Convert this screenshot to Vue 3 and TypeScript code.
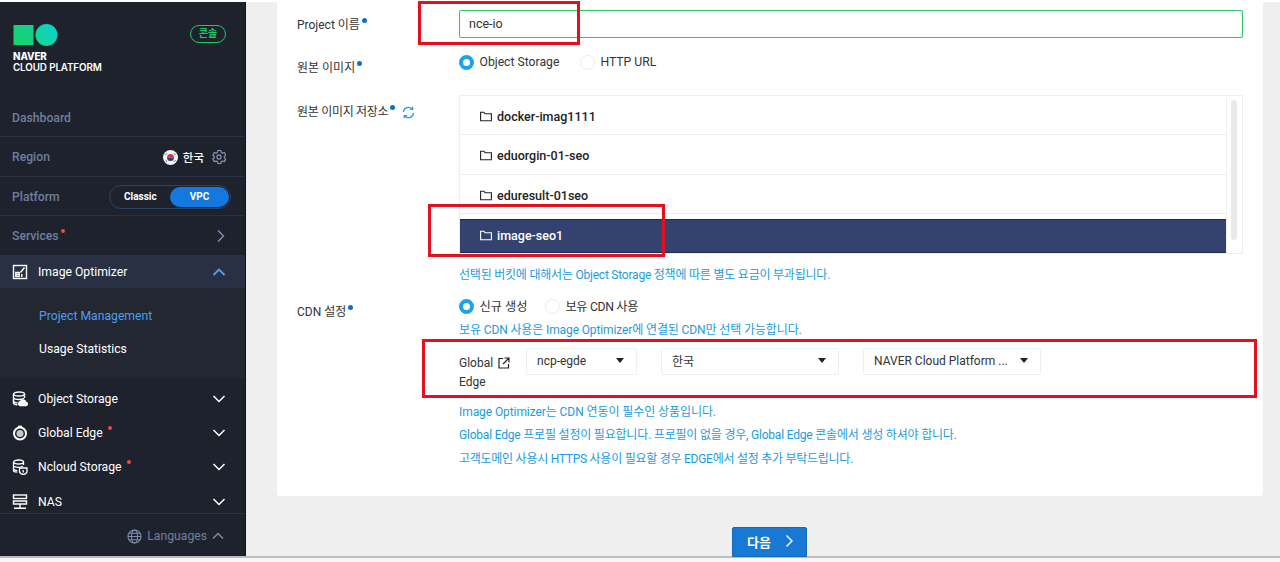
<script setup lang="ts">
const buckets = ['docker-imag1111', 'eduorgin-01-seo', 'eduresult-01seo']
const navs = [
  { name: 'Object Storage', icon: 'os', dot: false },
  { name: 'Global Edge', icon: 'ge', dot: true },
  { name: 'Ncloud Storage', icon: 'nc', dot: true },
  { name: 'NAS', icon: 'nas', dot: false },
]
const selects = [
  { text: 'ncp-egde', cls: 's1' },
  { text: '한국', cls: 's2' },
  { text: 'NAVER Cloud Platform ...', cls: 's2' },
]
const notes = [
  'Image Optimizer는 CDN 연동이 필수인 상품입니다.',
  'Global Edge 프로필 설정이 필요합니다. 프로필이 없을 경우, Global Edge 콘솔에서 생성 하셔야 합니다.',
  '고객도메인 사용시 HTTPS 사용이 필요할 경우 EDGE에서 설정 추가 부탁드립니다.',
]
</script>

<template>
  <div class="page">
    <div class="top-strip"></div>
    <div class="body">
      <aside class="side">
        <div class="brand">
          <div class="brand-left">
            <svg class="logo" width="46" height="22" viewBox="0 0 46 22">
              <defs>
                <linearGradient id="lg1" x1="0" y1="1" x2="1" y2="0">
                  <stop offset="0" stop-color="#17d36b" />
                  <stop offset="1" stop-color="#12cf8f" />
                </linearGradient>
                <linearGradient id="lg2" x1="0" y1="1" x2="1" y2="0">
                  <stop offset="0" stop-color="#14d78a" />
                  <stop offset="1" stop-color="#0fcfd0" />
                </linearGradient>
              </defs>
              <rect x="0.5" y="1" width="20" height="20" fill="url(#lg1)" />
              <circle cx="33.5" cy="11" r="11" fill="url(#lg2)" />
            </svg>
            <div class="brand-name"><b>NAVER</b><span>CLOUD PLATFORM</span></div>
          </div>
          <span class="console">콘솔</span>
        </div>

        <div class="row"><span class="row-title">Dashboard</span></div>
        <div class="row">
          <span class="row-title">Region</span>
          <span class="region">
            <svg width="15" height="15" viewBox="0 0 15 15">
              <circle cx="7.5" cy="7.5" r="7.5" fill="#f4f4f4" />
              <path d="M4 7.500a3.500 3.500 0 0 1 7 0z" fill="#d8333f" />
              <path d="M4 7.500a3.500 3.500 0 0 0 7 0z" fill="#27408f" />
              <path d="M2.500 4.800l1.400-1.400M2.600 10.300l1.400 1.400M12.500 4.800l-1.400-1.400M12.400 10.300l-1.400 1.400" stroke="#444" stroke-width="1" />
            </svg>
            <span class="region-name">한국</span>
            <svg width="14" height="14" viewBox="0 0 24 24" fill="none" stroke="#8a99b6" stroke-width="2" stroke-linejoin="round">
              <circle cx="12" cy="12" r="3.600" />
              <path d="M9.500 1.500h5l.7 3.200 2.200 1.300 3.200-1 2.400 4.300-2.400 2.200v2.500l2.400 2.200-2.400 4.300-3.200-1-2.200 1.300-.7 3.200h-5l-.7-3.200-2.200-1.300-3.200 1L.8 16l2.400-2.200v-2.500L.8 9.100l2.400-4.100 3.200 1 2.400-1.300z" transform="translate(.6 -.6)" />
            </svg>
          </span>
        </div>
        <div class="row">
          <span class="row-title">Platform</span>
          <span class="toggle">
            <span class="toggle-off">Classic</span>
            <span class="toggle-on">VPC</span>
          </span>
        </div>
        <div class="row">
          <span class="row-title">Services<i class="dot dot-svc"></i></span>
          <svg class="chev" width="12" height="14" viewBox="0 0 12 14" fill="none" stroke="#7f8fae" stroke-width="1.400">
            <path d="M3 1.500 8.500 7 3 12.500" />
          </svg>
        </div>

        <div class="active-head">
          <svg class="nav-icon" width="16" height="16" viewBox="0 0 16 16" fill="none" stroke="#fff" stroke-width="1.400">
            <rect x="1.500" y="1.500" width="13" height="13" />
            <path d="M3.800 8.500h3.400v4H3.800zM8.500 8.500l4-5" />
            <path d="M3.800 10.500h3.400M9.800 10v3" />
          </svg>
          <span class="nav-name">Image Optimizer</span>
          <svg class="nav-chev" width="14" height="10" viewBox="0 0 14 10" fill="none" stroke="#4aa3f5" stroke-width="1.800">
            <path d="M1.500 8 7 2.500 12.500 8" />
          </svg>
        </div>
        <div class="submenu">
          <a class="sub sub-on">Project Management</a>
          <a class="sub">Usage Statistics</a>
        </div>

        <div class="navs">
          <div v-for="n in navs" :key="n.name" class="nav">
            <svg v-if="n.icon === 'os'" class="nav-icon" width="16" height="16" viewBox="0 0 16 16" fill="none" stroke="#fff" stroke-width="1.400">
              <ellipse cx="7" cy="3" rx="5.500" ry="2" />
              <path d="M1.500 3v9c0 1 2 1.700 4 1.800M12.500 3v4M1.500 6.500c0 1.100 2.500 2 5.500 2 2 0 4-.4 5-1.200M1.500 10c0 1 2 1.700 4 1.900" />
              <path d="M8 14.500h5.500a1.700 1.700 0 0 0 .2-3.400 2.700 2.700 0 0 0-5.200-.3A1.900 1.900 0 0 0 8 14.500z" fill="#fff" />
            </svg>
            <svg v-else-if="n.icon === 'ge'" class="nav-icon" width="16" height="16" viewBox="0 0 16 16" fill="none">
              <circle cx="8" cy="8.500" r="6" stroke="#fff" stroke-width="2" />
              <circle cx="8" cy="8.500" r="3.500" fill="#c9c9c9" />
              <path d="M6 1.300h4" stroke="#fff" stroke-width="1.300" />
            </svg>
            <svg v-else-if="n.icon === 'nc'" class="nav-icon" width="16" height="16" viewBox="0 0 16 16" fill="none" stroke="#fff" stroke-width="1.300">
              <ellipse cx="6.500" cy="3" rx="5" ry="2" />
              <path d="M1.500 3v8.500c0 1 1.800 1.600 3.800 1.700M11.500 3v3M1.500 6.500c0 1 2.300 1.800 5 1.800 1.800 0 3.400-.3 4.500-1M1.500 9.800c0 1 1.800 1.600 3.800 1.800" />
              <path d="M7.500 9h7.500v3.500c0 1.300-1.600 2.500-3.700 3-2.200-.5-3.800-1.700-3.800-3z" />
              <path d="M11.200 11v2.500" />
            </svg>
            <svg v-else class="nav-icon" width="16" height="16" viewBox="0 0 16 16" fill="none" stroke="#fff" stroke-width="1.400">
              <rect x="1.500" y="1" width="13" height="3.500" />
              <path d="M1.500 7h13v3h-13z" />
              <path d="M8 10v4M2 14.300h12" />
            </svg>
            <span class="nav-name">{{ n.name }}<i v-if="n.dot" class="dot dot-nav"></i></span>
            <svg class="nav-chev" width="14" height="10" viewBox="0 0 14 10" fill="none" stroke="#fff" stroke-width="1.500">
              <path d="M1.500 2 7 7.500 12.500 2" />
            </svg>
          </div>
        </div>

        <div class="lang">
          <svg width="15" height="15" viewBox="0 0 16 16" fill="none" stroke="#7f8fae" stroke-width="1.100">
            <circle cx="8" cy="8" r="7" />
            <ellipse cx="8" cy="8" rx="3.200" ry="7" />
            <path d="M1 8h14M2 4.500h12M2 11.500h12" />
          </svg>
          <span>Languages</span>
          <svg width="12" height="8" viewBox="0 0 12 8" fill="none" stroke="#7f8fae" stroke-width="1.300">
            <path d="M1 6.500 6 1.500l5 5" />
          </svg>
        </div>
      </aside>

      <main class="main">
        <section class="card">
          <div class="form-row r-name">
            <label class="lbl">Project 이름<i class="req"></i></label>
            <div class="ctrl"><div class="input">nce-io</div></div>
          </div>

          <div class="form-row r-src">
            <label class="lbl lbl-src">원본 이미지<i class="req"></i></label>
            <div class="ctrl radios">
              <span class="radio on"></span><span class="r-text">Object Storage</span>
              <span class="radio"></span><span class="r-text">HTTP URL</span>
            </div>
          </div>

          <div class="form-row r-store">
            <label class="lbl lbl-store">
              <span class="tight">원본 이미지 저장소</span><i class="req"></i>
              <svg class="refresh" width="13" height="13" viewBox="0 0 14 14" fill="none" stroke="#1ba5e8" stroke-width="1.400">
                <path d="M1.500 6.500A5.500 5.500 0 0 1 11 3.200" />
                <path d="M12.500 7.500A5.500 5.500 0 0 1 3 10.800" />
                <path d="M11.500 .8v2.800H8.700M2.500 13.200v-2.800h2.800" />
              </svg>
            </label>
            <div class="ctrl">
              <div class="list">
                <div class="list-items">
                  <div v-for="b in buckets" :key="b" class="bucket">
                    <svg class="folder" width="12" height="11" viewBox="0 0 12 11" fill="none" stroke="#222" stroke-width="1.100">
                      <path d="M.6 2V9.800h10.800V2.800H5L4 1.200H.6z" />
                    </svg>
                    {{ b }}
                  </div>
                  <div class="bucket-sel">
                    <svg class="folder" width="12" height="11" viewBox="0 0 12 11" fill="none" stroke="#fff" stroke-width="1.100">
                      <path d="M.6 2V9.800h10.800V2.800H5L4 1.200H.6z" />
                    </svg>
                    image-seo1
                  </div>
                </div>
                <div class="track"><span class="thumb"></span></div>
              </div>
              <p class="note note-store">선택된 버킷에 대해서는 Object Storage 정책에 따른 별도 요금이 부과됩니다.</p>
            </div>
          </div>

          <div class="form-row r-cdn">
            <label class="lbl lbl-cdn">CDN 설정<i class="req"></i></label>
            <div class="ctrl">
              <div class="radios radios-cdn">
                <span class="radio on"></span><span class="r-text">신규 생성</span>
                <span class="radio"></span><span class="r-text tight">보유 CDN 사용</span>
              </div>
              <p class="note note-cdn">보유 CDN 사용은 Image Optimizer에 연결된 CDN만 선택 가능합니다.</p>
              <div class="edge">
                <div class="edge-label">
                  Global
                  <svg class="ext" width="12" height="12" viewBox="0 0 12 12" fill="none" stroke="#222" stroke-width="1.200">
                    <path d="M5 1.500H1v9.500h9.500V7M6.500 1h4.500v4.500M11 1 5 7" />
                  </svg>
                  Edge
                </div>
                <div v-for="s in selects" :key="s.text" class="select" :class="s.cls">
                  <span>{{ s.text }}</span><i class="caret"></i>
                </div>
              </div>
              <div class="notes">
                <p v-for="n in notes" :key="n" class="note-line">{{ n }}</p>
              </div>
            </div>
          </div>
        </section>
        <div class="actions">
          <button class="next" type="button">
            다음
            <svg width="9" height="14" viewBox="0 0 9 14" fill="none" stroke="#fff" stroke-width="1.400">
              <path d="M1.500 1.500 7 7l-5.500 5.500" />
            </svg>
          </button>
        </div>
      </main>
    </div>
    <div class="bottom-bar"></div>

    <div class="mark m1"></div>
    <div class="mark m2"></div>
    <div class="mark m3"></div>
  </div>
</template>

<style>
html, body { margin: 0; padding: 0; overflow: hidden; }
</style>

<style scoped>
* { box-sizing: border-box; }
.page {
  position: relative;
  width: 1280px;
  height: 562px;
  overflow: hidden;
  display: flex;
  flex-direction: column;
  background: #fff;
  font-family: Roboto, "Noto Sans CJK KR", sans-serif;
  font-size: 12px;
  color: #333;
}
.top-strip { height: 2px; background: #fff; flex: none; }
.body { flex: 1; display: flex; min-height: 0; }
.bottom-bar { height: 6px; flex: none; background: #f6f6f6; border-top: 2px solid #bdbdbd; position: relative; z-index: 1; }

/* sidebar */
.side {
  width: 246px;
  flex: none;
  background: #1e222d;
  border-right: 1px solid #111;
  display: flex;
  flex-direction: column;
  font-weight: 500;
}
.brand {
  height: 96px;
  flex: none;
  display: flex;
  justify-content: space-between;
  padding: 22px 19px 0 13px;
}
.logo { display: block; }
.brand-name {
  display: flex;
  flex-direction: column;
  margin-top: 6px;
  color: #fff;
  font-size: 9.800px;
  line-height: 10.500px;
  font-family: Inter, Roboto, sans-serif;
  font-weight: 600;
  letter-spacing: -.1px;
}
.brand-name b { font-weight: 800; }
.console {
  margin-top: 1px;
  width: 36px;
  height: 18px;
  border: 1.500px solid #1fc964;
  border-radius: 9px;
  color: #1fc964;
  font-size: 10px;
  font-weight: 700;
  line-height: 15px;
  text-align: center;
}
.row {
  height: 39.250px;
  flex: none;
  display: flex;
  align-items: center;
  justify-content: space-between;
  padding: 2px 19px 0 12px;
  border-bottom: 1px solid #2a3142;
}
.row:nth-of-type(5) { border-bottom: none; }
.row-title { color: #6f7f9e; font-size: 12.200px; position: relative; }
.region { display: flex; align-items: center; }
.region-name { color: #fff; font-size: 11.500px; margin: 0 8px 0 5px; }
.toggle {
  width: 122px;
  height: 24px;
  margin-right: -5px;
  border: 1px solid #2a4565;
  border-radius: 12px;
  display: flex;
  align-items: center;
  justify-content: space-between;
  padding: 1px;
  font-size: 10px;
  font-weight: 700;
  color: #fff;
}
.toggle-off { padding-left: 13px; }
.toggle-on {
  width: 59px;
  height: 20px;
  border-radius: 10px;
  background: #1578e0;
  text-align: center;
  line-height: 20px;
}
.dot { position: absolute; width: 4px; height: 4px; border-radius: 50%; background: #ef4b3e; display: block; }
.dot-svc { right: -6px; top: 0; }
.chev { margin-right: -1px; }
.active-head {
  height: 33px;
  flex: none;
  display: flex;
  align-items: center;
  background: #2a3044;
  padding: 0 19px 0 12px;
}
.nav-icon { flex: none; margin-right: 10px; }
.nav-name { flex: 1; color: #fff; font-size: 12.200px; font-weight: 400; position: relative; }
.nav-chev { flex: none; }
.submenu {
  height: 90px;
  flex: none;
  background: #222732;
  display: flex;
  flex-direction: column;
  padding: 12px 0 0 39px;
}
.sub { height: 33px; line-height: 33px; color: #fff; font-size: 12.200px; font-weight: 400; }
.sub-on { color: #4b9ff0; }
.navs {
  flex: 1;
  min-height: 0;
  display: flex;
  flex-direction: column;
  padding-top: 3.500px;
  border-bottom: 1px solid #2a3142;
}
.nav {
  height: 34.400px;
  flex: none;
  display: flex;
  align-items: center;
  padding: 0 19px 0 12px;
}
.nav:nth-child(2) .dot-nav { left: 70px; top: 0; }
.nav:nth-child(3) .dot-nav { left: 89px; top: 0; }
.lang {
  height: 42px;
  flex: none;
  display: flex;
  align-items: center;
  justify-content: flex-end;
  gap: 5px;
  padding: 2px 21px 0 0;
  color: #6f7f9e;
  font-size: 12.200px;
  font-weight: 400;
}

/* main */
.main {
  flex: 1;
  min-width: 0;
  position: relative;
  background: #efefef;
  padding: 0 17px 0 31px;
}
.card {
  height: 494px;
  background: #fff;
  border-radius: 0 0 3px 3px;
  padding: 8px 20px 0;
}
.form-row { display: flex; }
.lbl { width: 162px; flex: none; font-size: 12px; color: #333; display: block; }
.ctrl { flex: 1; min-width: 0; }
.tight { letter-spacing: -.3px; }
.req {
  display: inline-block;
  width: 5px;
  height: 5px;
  border-radius: 50%;
  background: #0f6fd1;
  vertical-align: 6px;
  margin-left: 2px;
}
.r-name { height: 28px; margin-bottom: 14px; }
.r-name .lbl { line-height: 30px; }
.input {
  height: 28px;
  border: 1px solid #2cc56a;
  border-radius: 2px;
  padding-left: 9px;
  line-height: 26px;
  font-size: 12.500px;
  color: #333;
}
.r-src { height: 20px; margin-bottom: 23px; }
.lbl-src { line-height: 32px; }
.radios { display: flex; align-items: center; height: 20px; }
.radio {
  width: 15px;
  height: 15px;
  border-radius: 50%;
  border: 1px solid #ececec;
  background: #fff;
  flex: none;
}
.radio.on { border: 4.500px solid #1ba5e8; }
.r-text { font-size: 12.200px; margin: 0 20.500px 0 5.500px; color: #333; }
.lbl-store { line-height: 34px; }
.refresh { vertical-align: -3px; margin-left: 7px; }
.list {
  height: 159px;
  border: 1px solid #efefef;
  display: flex;
}
.list-items { flex: 1; min-width: 0; display: flex; flex-direction: column; border-right: 1px solid #f2f2f2; }
.bucket {
  height: 39.300px;
  flex: none;
  display: flex;
  align-items: center;
  padding: 3px 0 0 20px;
  font-size: 12.500px;
  font-weight: 500;
  color: #222;
  border-bottom: 1.500px solid #ececec;
}
.folder { margin-right: 5px; flex: none; }
.bucket-sel {
  height: 34px;
  margin-top: 5px;
  flex: none;
  display: flex;
  align-items: center;
  padding-left: 20px;
  background: #34426f;
  border-top: 1px solid #1c2a55;
  border-bottom: 1px solid #1c2a55;
  color: #fff;
  font-size: 12.500px;
  font-weight: 500;
}
.track { width: 15px; flex: none; padding: 4px 0 0 4px; }
.thumb { display: block; width: 6px; height: 140px; border-radius: 3px; background: #e9e9e9; }
.note { margin: 0; color: #1a9be0; font-size: 12px; letter-spacing: -.22px; }
.note-store { margin-top: 12px; line-height: 18px; margin-bottom: 12px; height: 18px; }
.r-cdn { height: 0; }
.lbl-cdn { line-height: 32px; }
.radios-cdn .r-text { margin-right: 17.500px; }
.note-cdn { line-height: 18px; margin-top: 5px; letter-spacing: -.12px; }
.edge { display: flex; margin-top: 9px; height: 52.500px; align-items: flex-start; }
.edge-label { width: 67px; padding-right: 10px; font-size: 12px; line-height: 19px; padding-top: 6px; color: #333; flex: none; }
.ext { vertical-align: -2px; margin-left: 2px; }
.select {
  height: 27px;
  margin-right: 24px;
  background: #fff;
  border: 1px solid #efefef;
  border-radius: 2px;
  display: flex;
  align-items: center;
  justify-content: space-between;
  padding: 0 12px 2px 10px;
  font-size: 12px;
  color: #333;
}
.select.s1 { width: 111px; }
.select.s2 { width: 178px; }
.caret {
  display: block;
  width: 0;
  height: 0;
  border-left: 4px solid transparent;
  border-right: 4px solid transparent;
  border-top: 5px solid #222;
}
.notes { display: flex; flex-direction: column; }
.note-line { margin: 0; height: 23.500px; line-height: 23.500px; color: #1a9be0; font-size: 12px; white-space: nowrap; letter-spacing: -.2px; }
.note-line:first-child { letter-spacing: -.08px; }
.note-line:last-child { letter-spacing: -.26px; }
.actions { display: flex; padding: 31px 0 0 455px; }
.next {
  width: 75px;
  height: 30px;
  background: #1779d4;
  border: 1px solid #1368ba;
  border-radius: 2px 2px 0 0;
  color: #fff;
  font-family: Roboto, "Noto Sans CJK KR", sans-serif;
  font-size: 13px;
  font-weight: 700;
  display: flex;
  align-items: center;
  justify-content: center;
  gap: 14px;
  padding: 0 0 2px 2px;
  position: relative;
  z-index: 2;
}

/* annotation boxes drawn over the screenshot */
.mark { position: absolute; border: 3px solid #e3101d; z-index: 3; pointer-events: none; }
.m1 { left: 418px; top: 1px; width: 162px; height: 44px; }
.m2 { left: 428px; top: 204px; width: 237px; height: 53px; }
.m3 { left: 422px; top: 339px; width: 835px; height: 59px; }
</style>
